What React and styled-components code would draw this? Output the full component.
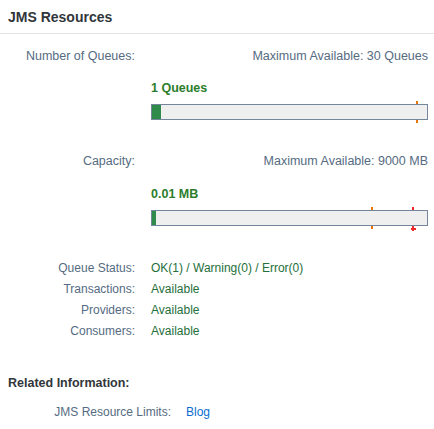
import React from "react";
import styled, { createGlobalStyle } from "styled-components";

const Global = createGlobalStyle`
  html, body { margin: 0; padding: 0; background: #fff; }
  body { font-family: "Liberation Sans", Arial, sans-serif; color: #32363a; }
`;

const Page = styled.div`
  width: 434px;
  display: flex;
  flex-direction: column;
`;

const Header = styled.div`
  height: 33px;
  padding: 0 8px;
  display: flex;
  align-items: center;
  border-bottom: 1px solid #e3e4e5;
  font-size: 14px;
  font-weight: bold;
  color: #32363a;
`;

const Body = styled.div`
  display: flex;
  flex-direction: column;
  padding: 0 6px 0 0;
`;

const Grid = styled.div`
  display: grid;
  grid-template-columns: ${(p) => p.$col || 135}px 1fr;
  column-gap: ${(p) => p.$gap || 16}px;
  margin-top: ${(p) => p.$mt || 0}px;
  font-size: ${(p) => p.$fs || 12}px;
  line-height: ${(p) => p.$lh || 18}px;
`;

const Label = styled.div`
  text-align: right;
  color: #556b82;
  white-space: nowrap;
`;

const MaxText = styled.div`
  text-align: right;
  color: #556b82;
`;

const Value = styled.div`
  color: ${(p) => (p.$link ? "#0a6ed1" : "#256f3a")};
`;

const Amount = styled.div`
  grid-column: 2;
  margin-top: ${(p) => p.$mt || 0}px;
  color: #2b7d2b;
  font-weight: bold;
  font-size: 12.5px;
`;

const BarWrap = styled.div`
  grid-column: 2;
  margin-top: 7px;
  position: relative;
  height: 16px;
`;

const Bar = styled.div`
  box-sizing: border-box;
  height: 16px;
  border: 1px solid #74859c;
  background: #efefef;
  display: flex;
`;

const Fill = styled.div`
  background: #2e8b4a;
  height: 100%;
`;

const Tick = styled.div`
  position: absolute;
  width: 2px;
  height: 3px;
  background: ${(p) => p.$color};
  top: ${(p) => (p.$below ? "16px" : "-3px")};
`;

const Cross = styled.div`
  position: absolute;
  top: 16px;
  width: 5px;
  height: 5px;
  &::before, &::after {
    content: "";
    position: absolute;
    background: #f02a2a;
  }
  &::before { left: 1.5px; top: 0; width: 2px; height: 5px; }
  &::after { left: 0; top: 1.5px; width: 5px; height: 2px; }
`;

const SectionTitle = styled.div`
  margin-top: 32px;
  padding-left: 8px;
  font-size: 12.5px;
  line-height: 18px;
  font-weight: bold;
  color: #32363a;
`;

const Link = styled.a`
  color: #0a6ed1;
  text-decoration: none;
`;

function Meter({ fill, ticks, cross }) {
  return (
    <BarWrap>
      <Bar>
        <Fill style={{ width: fill }} />
      </Bar>
      {ticks.map((t, i) => (
        <React.Fragment key={i}>
          <Tick $color={t.color} style={{ left: t.x }} />
          {t.below && <Tick $below $color={t.color} style={{ left: t.x }} />}
        </React.Fragment>
      ))}
      {cross != null && <Cross style={{ left: cross }} />}
    </BarWrap>
  );
}

export default function App() {
  return (
    <Page>
      <Global />
      <Header>JMS Resources</Header>
      <Body>
        <Grid $mt={13} $fs={12.5}>
          <Label>Number of Queues:</Label>
          <MaxText>Maximum Available: 30 Queues</MaxText>
          <Amount $mt={14}>1 Queues</Amount>
          <Meter fill={9} ticks={[{ color: "#e9730c", x: 265, below: true }]} />
        </Grid>
        <Grid $mt={32} $fs={12.5}>
          <Label>Capacity:</Label>
          <MaxText>Maximum Available: 9000 MB</MaxText>
          <Amount $mt={15}>0.01 MB</Amount>
          <Meter
            fill={4}
            ticks={[
              { color: "#e9730c", x: 220, below: true },
              { color: "#f02a2a", x: 261, below: false },
            ]}
            cross={259.5}
          />
        </Grid>
        <Grid $mt={32} $lh={21}>
          <Label>Queue Status:</Label>
          <Value>OK(1) / Warning(0) / Error(0)</Value>
          <Label>Transactions:</Label>
          <Value>Available</Value>
          <Label>Providers:</Label>
          <Value>Available</Value>
          <Label>Consumers:</Label>
          <Value>Available</Value>
        </Grid>
      </Body>
      <SectionTitle>Related Information:</SectionTitle>
      <Grid $mt={11} $col={171} $gap={15}>
        <Label>JMS Resource Limits:</Label>
        <Value $link>
          <Link href="#">Blog</Link>
        </Value>
      </Grid>
    </Page>
  );
}
